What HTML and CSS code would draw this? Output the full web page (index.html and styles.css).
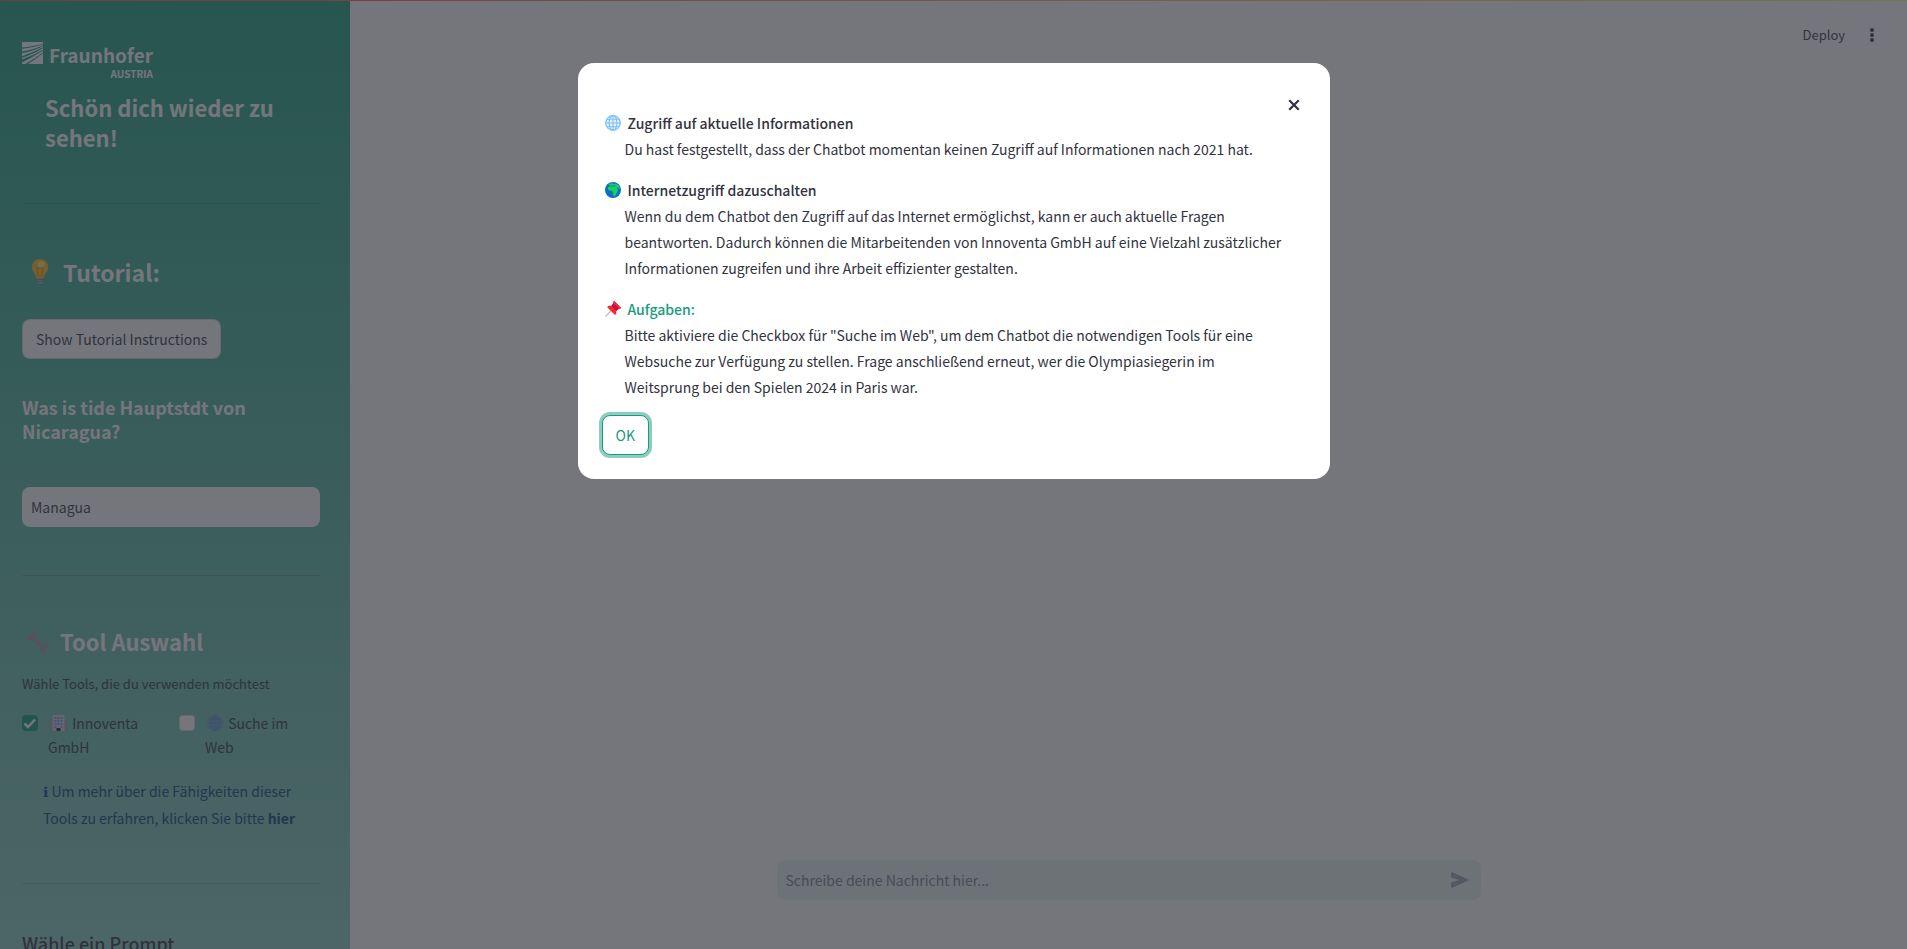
FILE: index.html
```
<!DOCTYPE html>
<html lang="de">
<head>
<meta charset="utf-8">
<meta name="viewport" content="width=device-width, initial-scale=1">
<title>Fraunhofer Austria Chatbot</title>
<link rel="stylesheet" href="styles.css">
</head>
<body>

<!-- emoji used in more than one place -->
<svg class="sprite" aria-hidden="true">
  <symbol id="globe" viewBox="0 0 16 16">
    <circle cx="8" cy="8" r="7.3" fill="#e3f1fd" stroke="#7cc0f8" stroke-width="1.3"/>
    <path d="M8 .7v14.6M.7 8h14.6M2 4.2h12M2 11.8h12" stroke="#7cc0f8" stroke-width="1.1" fill="none"/>
    <ellipse cx="8" cy="8" rx="3.9" ry="7.3" fill="none" stroke="#7cc0f8" stroke-width="1.1"/>
  </symbol>
  <symbol id="globe-blue" viewBox="0 0 16 16">
    <circle cx="8" cy="8" r="8" fill="#6fa3c8"/>
    <path d="M8 .7v14.6M.7 8h14.6M2 4.2h12M2 11.8h12" stroke="#5c93c4" stroke-width="1" fill="none"/>
    <ellipse cx="8" cy="8" rx="3.9" ry="7.3" fill="none" stroke="#5c93c4" stroke-width="1"/>
  </symbol>
</svg>

<div class="decoration"></div>

<div class="app">
  <aside class="sidebar">
    <div class="logo">
      <svg width="21" height="22" viewBox="0 0 21 22">
        <rect width="21" height="22" fill="#fff"/>
        <path d="M0 5.600Q12 4.500 21 1.400V2Q12 5.600 0 6.800zM0 9.600Q12 7.500 21 3.200V3.900Q12 9 0 11zM0 14.200Q12 10 21 5.200V6Q12 12 0 15.800zM0 17.500Q12 13 21 7.800V8.600Q11 15 0 20.600zM3.500 22Q13 16.500 21 10.400V11.200Q14 17 6 22z" fill="#179c7d"/>
      </svg>
      <div class="logo-text">Fraunhofer<small>AUSTRIA</small></div>
    </div>

    <h2 class="greeting">Schön dich wieder zu sehen!</h2>

    <hr>

    <h1 class="tutorial">
      <svg width="35" height="28" viewBox="0 0 35 28">
        <path d="M18 1a8 8 0 0 0-8.200 8.200c0 4.500 4 6.500 4.500 10.800h7.400c.5-4.300 4.500-6.300 4.500-10.800A8 8 0 0 0 18 1z" fill="#fdb813"/>
        <circle cx="19" cy="6.500" r="3.500" fill="#ffe36b"/>
        <path d="M15 9l1.500 10M21 9l-1.500 10M15 10h6" fill="none" stroke="#e08a00" stroke-width="1"/>
        <path d="M14.500 20h7v4.500L18 26l-3.500-1.500z" fill="#a9a3b3"/>
        <path d="M14 22l8-1M14 24l8-1" stroke="#6f6a78" stroke-width=".8"/>
      </svg>
      Tutorial:
    </h1>

    <button type="button" class="button">Show Tutorial Instructions</button>

    <h3 class="question"><label for="answer">Was is tide Hauptstdt von Nicaragua?</label></h3>
    <input type="text" id="answer" class="text-input" value="Managua">

    <hr>

    <h1 class="tools">
      <svg width="32" height="28" viewBox="0 0 32 28">
        <path d="M10.500 3.200l.2 4.300-3.400 2.200-3.600-2.100a5.600 5.600 0 0 0 7.500 5.400l7.500 7.300a5.600 5.600 0 0 0 5 7.200l-2.400-3.800 2.100-3.400 4.200.2a5.600 5.600 0 0 0-7-3.100l-7.400-7.300a5.600 5.600 0 0 0-2.700-6.900z" fill="#a890a8"/>
      </svg>
      Tool Auswahl
    </h1>
    <p class="caption">Wähle Tools, die du verwenden möchtest</p>

    <div class="checks">
      <label class="check">
        <input type="checkbox" checked>
        <span>
          <svg width="17" height="16" viewBox="0 0 17 16">
            <path d="M0 4h3v12H0zM14 4h3v12h-3z" fill="#a09aa8"/>
            <path d="M2.500 0h12v16h-12z" fill="#d5ccd8"/>
            <path d="M4.500 2h2v2h-2zM7.500 2h2v2h-2zM10.500 2h2v2h-2zM4.500 5h2v2h-2zM7.500 5h2v2h-2zM10.500 5h2v2h-2zM4.500 8h2v2h-2zM7.500 8h2v2h-2zM10.500 8h2v2h-2zM4.500 11h2v2h-2zM10.500 11h2v2h-2z" fill="#5aa7ee"/>
            <path d="M6.500 13h4v3h-4z" fill="#1c1c24"/>
          </svg>
          Innoventa GmbH
        </span>
      </label>
      <label class="check">
        <input type="checkbox">
        <span><svg width="16" height="16"><use href="#globe-blue"/></svg> Suche im Web</span>
      </label>
    </div>

    <p class="info"><b class="i">ℹ</b> Um mehr über die Fähigkeiten dieser Tools zu erfahren, klicken Sie bitte <a href="#">hier</a></p>

    <hr>

    <h3 class="prompt">Wähle ein Prompt</h3>
  </aside>

  <main class="main">
    <header class="toolbar">
      <button type="button" class="deploy">Deploy</button>
      <button type="button" class="menu" aria-label="Menu">
        <svg width="6" height="16" viewBox="0 0 6 16" fill="#31333f"><circle cx="3" cy="3" r="2"/><circle cx="3" cy="8" r="2"/><circle cx="3" cy="13" r="2"/></svg>
      </button>
    </header>
    <form class="chat">
      <input type="text" aria-label="Nachricht" placeholder="Schreibe deine Nachricht hier...">
      <button type="button" aria-label="Senden">
        <svg width="18" height="16" viewBox="0 0 18 16"><path d="M0 1.200C0 .4.600 0 1.300.300L17 7.200c.8.400.8 1.200 0 1.600L1.300 15.700c-.7.300-1.300-.1-1.300-.9V10.300L8.500 8 0 5.700z" fill="#a0a4b8"/></svg>
      </button>
    </form>
  </main>
</div>

<div class="overlay">
  <div class="modal" role="dialog" aria-modal="true">
    <button type="button" class="close" aria-label="Close">
      <svg width="12" height="12" viewBox="0 0 12 12"><path d="M2 2l8 8M10 2l-8 8" stroke="#31333f" stroke-width="2.200" stroke-linecap="square"/></svg>
    </button>

    <dl class="steps">
      <dt><svg width="16" height="16"><use href="#globe"/></svg>Zugriff auf aktuelle Informationen</dt>
      <dd>Du hast festgestellt, dass der Chatbot momentan keinen Zugriff auf Informationen nach 2021 hat.</dd>

      <dt>
        <svg width="16" height="16" viewBox="0 0 16 16">
          <circle cx="8" cy="8" r="8" fill="#0a6fc2"/>
          <path d="M3.500 2.500L6 1.200l2.200.3 1 .8L11 1.500l2.800 1.900 1.300 3-1.300.3-1.300-1.400-.8.800 1.500 2.200-1.500 2.100-.4 2.200-1.700 1.800-1.400-.8-.2-3.100L6.800 8.700 4 8.500 2.700 6.800l.6-1.800 2.200-.8z" fill="#17cf63"/>
          <path d="M5.500 3.800l3 .3 2-.5" stroke="#0a6fc2" stroke-width=".8" fill="none"/>
        </svg>Internetzugriff dazuschalten
      </dt>
      <dd>Wenn du dem Chatbot den Zugriff auf das Internet ermöglichst, kann er auch aktuelle Fragen beantworten. Dadurch können die Mitarbeitenden von Innoventa GmbH auf eine Vielzahl zusätzlicher Informationen zugreifen und ihre Arbeit effizienter gestalten.</dd>

      <dt class="task">
        <svg width="16" height="16" viewBox="0 0 16 16">
          <path d="M.5 15.500L6 9.800" stroke="#c4c0c9" stroke-width="1.400"/>
          <path d="M9.500.3l6 6c.8 1-.3 1.700-1.300 1.300l-3 2.500c.4 1.700-.1 3.100-1.200 3.900L2.200 6.300c.8-1.300 2.300-1.700 4-1.300l2.400-3C8 1 8.700-.3 9.500.3z" fill="#f8282f"/>
          <path d="M8.600 2l5.600 5.600-3 2.500-5-5z" fill="#c4104d"/>
          <path d="M9.500.3l6 6c.8 1-.3 1.700-1.300 1.300L8.600 2C8 1 8.700-.3 9.500.3z" fill="#f8282f"/>
        </svg>Aufgaben:
      </dt>
      <dd>Bitte aktiviere die Checkbox für "Suche im Web", um dem Chatbot die notwendigen Tools für eine Websuche zur Verfügung zu stellen. Frage anschließend erneut, wer die Olympiasiegerin im Weitsprung bei den Spielen 2024 in Paris war.</dd>
    </dl>

    <button type="button" class="button ok">OK</button>
  </div>
</div>

</body>
</html>
```
FILE: styles.css
```
* {
  box-sizing: border-box;
}

body {
  margin: 0;
  font-family: "Source Sans Pro", "Noto Sans CJK SC", sans-serif;
  font-size: 14px;
  line-height: 24px;
  color: #31333f;
  overflow: hidden;
}

h1, h2, h3, p, dl, dd {
  margin: 0;
}

button, input {
  font: inherit;
  color: inherit;
}

button {
  cursor: pointer;
}

.sprite {
  display: none;
}

.decoration {
  height: 1px;
  background: linear-gradient(90deg, #ff4b4b, #fffd80);
}

.app {
  display: flex;
  height: calc(100vh - 1px);
}

/* sidebar */

.sidebar {
  flex: 0 0 350px;
  padding: 41px 30px 0 22px;
  overflow: hidden;
  background: linear-gradient(#179c7d, #88ccc0);
}

.sidebar hr {
  margin: 0;
  border: 0;
  border-top: 1px solid rgba(49, 51, 63, 0.2);
}

.sidebar h1,
.sidebar h2,
.question {
  color: #fff;
  font-weight: 700;
}

.logo {
  display: flex;
  gap: 6px;
}

.logo-text {
  display: flex;
  flex-direction: column;
  align-items: flex-end;
  color: #fff;
  font-size: 19px;
  font-weight: 700;
  line-height: 26px;
}

.logo-text small {
  font-size: 10px;
  line-height: 12px;
}

.greeting {
  padding: 12px 20px 51px 23px;
  font-size: 22px;
  line-height: 30px;
}

.sidebar h1 {
  display: flex;
  align-items: center;
  gap: 6px;
  font-size: 22px;
  line-height: 32px;
}

.sidebar .tutorial {
  padding: 52px 0 31px;
  font-size: 23px;
}

.button {
  display: block;
  height: 40px;
  padding: 0 13px;
  border: 1px solid rgba(49, 51, 63, 0.2);
  border-radius: 8px;
  background: #fff;
}

.question {
  padding: 36px 0;
  font-size: 18px;
  line-height: 24px;
}

.text-input {
  display: block;
  width: 100%;
  height: 40px;
  margin: 8px 0 48px;
  padding: 0 9px;
  border: 0;
  border-radius: 8px;
  background: #fff;
}

.sidebar .tools {
  padding: 49px 0 15px;
}

.caption {
  font-size: 13px;
}

.checks {
  display: flex;
  gap: 16px;
  padding: 15px 0 19px;
}

.check {
  display: flex;
  flex: 1;
  gap: 10px;
}

.check input {
  appearance: none;
  flex: none;
  width: 16px;
  height: 16px;
  margin: 4px 0;
  border: 1px solid rgba(49, 51, 63, 0.2);
  border-radius: 4px;
  background: #fff;
}

.check input:checked {
  border: 0;
  background: #0b9b72 url('data:image/svg+xml,<svg xmlns="http://www.w3.org/2000/svg" viewBox="0 0 16 16"><path d="M2.500 8.500l3.500 3.500 7-7.500" fill="none" stroke="white" stroke-width="2.500"/></svg>');
}

.check svg {
  margin: 0 2px;
  vertical-align: -2px;
}

.info {
  padding: 0 14px 52px 21px;
  line-height: 26px;
  color: #004280;
}

.info a {
  color: inherit;
  font-weight: 700;
  text-decoration: none;
}

.i {
  font-family: "DejaVu Sans", sans-serif;
}

.prompt {
  padding-top: 47px;
  font-size: 18px;
  font-weight: 500;
}

/* main area */

.main {
  display: flex;
  flex: 1;
  flex-direction: column;
  justify-content: space-between;
  background: #fff;
}

.toolbar {
  display: flex;
  justify-content: flex-end;
  gap: 24px;
  padding: 22px 32px;
}

.toolbar button {
  padding: 0;
  border: 0;
  background: none;
  font-size: 13px;
}

.menu {
  display: flex;
  align-items: center;
}

.chat {
  display: flex;
  align-items: center;
  align-self: center;
  width: 704px;
  max-width: 100%;
  height: 40px;
  margin-bottom: 49px;
  padding: 0 12px 0 9px;
  border-radius: 8px;
  background: #e8f1f3;
}

.chat input {
  flex: 1;
  padding: 0;
  border: 0;
  background: none;
}

.chat input::placeholder {
  color: #777f92;
}

.chat button {
  display: flex;
  padding: 0;
  border: 0;
  background: none;
}

/* dialog */

.overlay {
  position: fixed;
  inset: 0;
  padding: 63px 16px;
  background: rgba(48, 50, 58, 0.67);
}

.modal {
  position: relative;
  max-width: 752px;
  margin: 0 auto;
  padding: 47px 24px 24px;
  border-radius: 16px;
  background: #fff;
}

.close {
  position: absolute;
  top: 36px;
  right: 30px;
  display: flex;
  padding: 0;
  border: 0;
  background: none;
}

.steps {
  padding: 0 20px 0 3px;
  line-height: 26px;
}

.steps dt {
  display: flex;
  align-items: center;
  gap: 7px;
  font-weight: 500;
}

.steps dd {
  padding-left: 20px;
  margin-bottom: 15px;
}

.task {
  color: #179c7d;
}

.ok {
  border-color: #179c7d;
  color: #179c7d;
  box-shadow: 0 0 0 3px rgba(23, 156, 125, 0.5);
}
```
